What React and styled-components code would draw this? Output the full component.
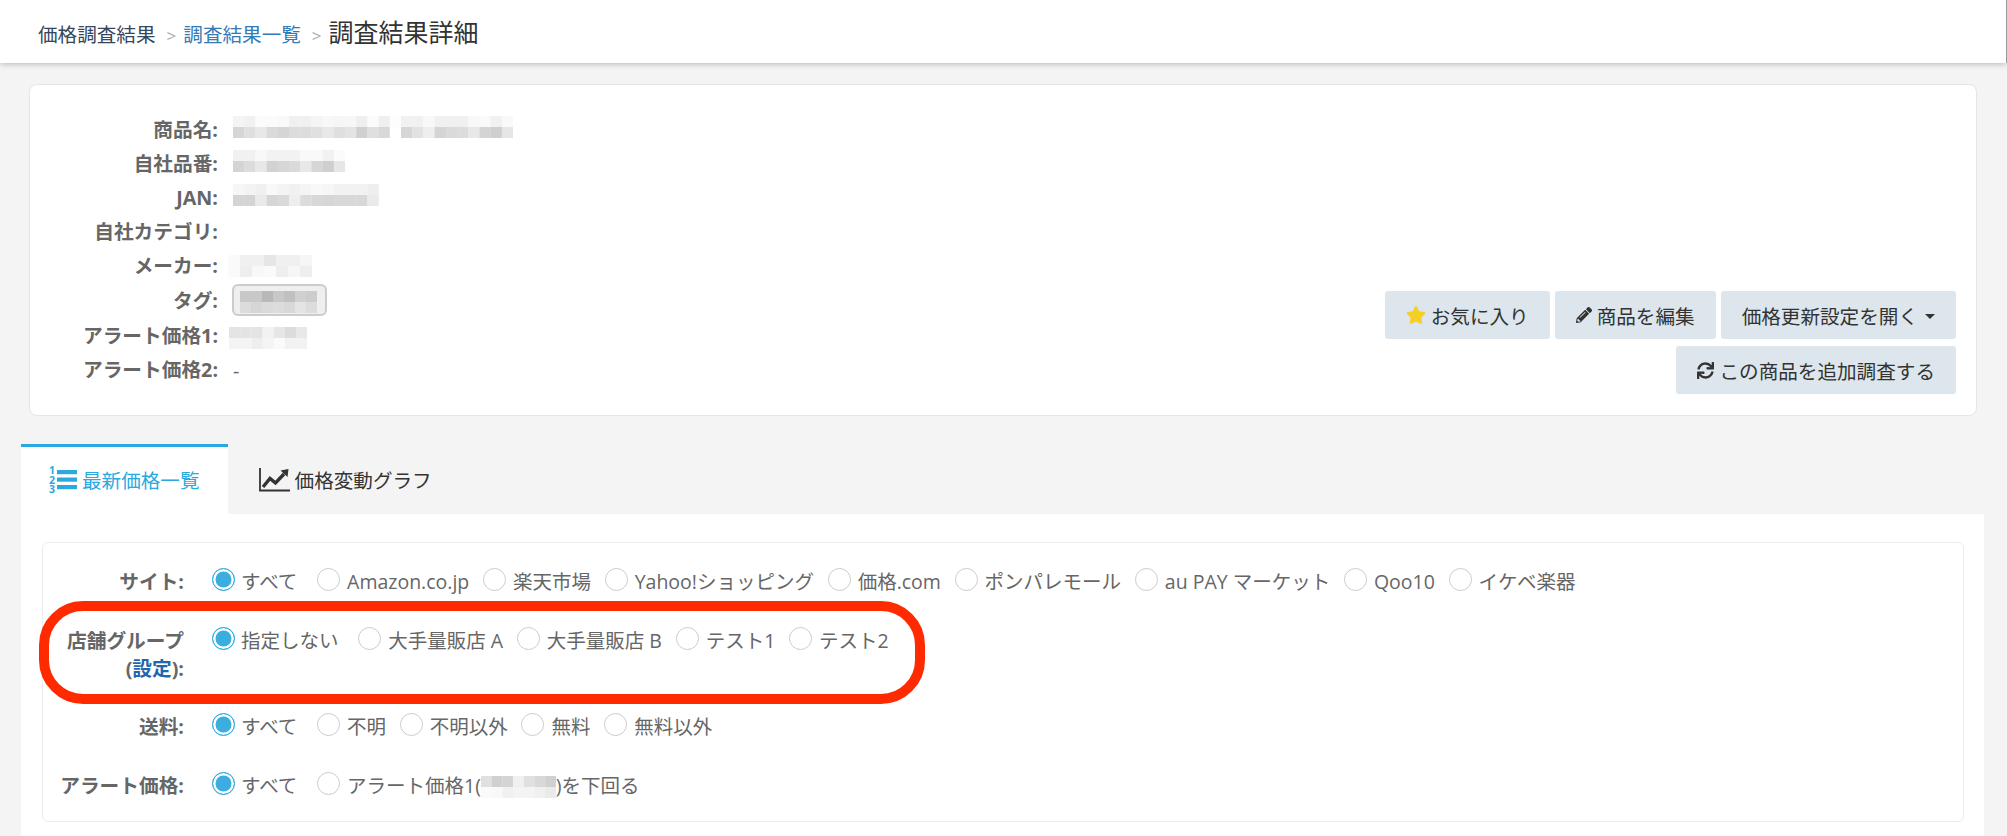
import React from "react";
import styled, { createGlobalStyle } from "styled-components";
import { FaStar, FaPencilAlt, FaSync } from "react-icons/fa";

const Global = createGlobalStyle`
  html, body { margin: 0; padding: 0; background: #f4f4f4; }
  body { font-family: "Open Sans", "Noto Sans CJK JP", sans-serif; font-size: 19.5px; color: #666; }
  * { box-sizing: border-box; }
`;

const Page = styled.div`
  width: 2007px;
  height: 836px;
  overflow: hidden;
  background: #f4f4f4;
`;

const Header = styled.header`
  height: 63px;
  background: #fff;
  border-right: 1px solid #9a9a9a;
  box-shadow: 0 1px 6px rgba(0, 0, 0, 0.25);
  display: flex;
  align-items: baseline;
  padding: 18px 0 0 38px;
  position: relative;
`;

const Crumb = styled.span`
  font-size: 19.6px;
  line-height: 28px;
  color: #34475c;
`;

const CrumbLink = styled.a`
  font-size: 19.6px;
  line-height: 28px;
  color: #337ab7;
`;

const CrumbSep = styled.span`
  font-size: 17px;
  color: #aaa;
  margin: 0 7px 0 11px;
`;

const CrumbTitle = styled.h1`
  margin: 0;
  font-size: 25px;
  line-height: 28px;
  font-weight: 400;
  color: #333;
`;

const Card = styled.section`
  margin: 21px 30px 0 29px;
  height: 332px;
  background: #fff;
  border: 1px solid #e6e6e6;
  border-radius: 8px;
  display: flex;
  justify-content: space-between;
  align-items: flex-end;
  padding: 28px 20px 21px 0;
`;

const Info = styled.dl`
  margin: 0;
  align-self: flex-start;
  display: flex;
  flex-direction: column;
`;

const InfoRow = styled.div`
  display: grid;
  grid-template-columns: 188px 1fr;
  column-gap: 15px;
  height: 34px;
  align-items: center;
  margin-top: ${(p) => p.$gap || 0}px;
`;

const InfoLabel = styled.dt`
  text-align: right;
  font-weight: 700;
  color: #666;
  font-size: 19.7px;
  line-height: 28px;
  white-space: nowrap;
`;

const InfoValue = styled.dd`
  margin: 0;
  display: flex;
  align-items: center;
  color: #666;
  height: 34px;
`;

const MosaicSvg = styled.svg`
  display: block;
  flex: none;
  margin-left: ${(p) => p.$left || 0}px;
  margin-top: ${(p) => p.$top || 0}px;
  filter: blur(0.4px);
`;

const InlineMosaic = styled(MosaicSvg)`
  display: inline-block;
  vertical-align: middle;
`;

const Tag = styled.span`
  width: 95px;
  height: 32px;
  background: #efefef;
  border: 2px solid #ccc;
  border-radius: 6px;
  display: flex;
  align-items: center;
  padding: 4px 0 0 6px;
  margin: -2px 0 0 -1px;
`;

const Actions = styled.div`
  display: flex;
  flex-direction: column;
  gap: 7px;
  align-items: flex-end;
`;

const ActionRow = styled.div`
  display: flex;
  gap: 5px;
`;

const Button = styled.button`
  height: 48px;
  border: 0;
  border-radius: 3px;
  background: #dce6ec;
  color: #333;
  font: inherit;
  font-size: 19.6px;
  padding: 0 21px;
  display: flex;
  align-items: center;
  gap: 5px;
  svg { flex: none; }
`;

const Caret = styled.i`
  width: 0;
  height: 0;
  margin-left: 2px;
  margin-top: 3px;
  border-left: 5px solid transparent;
  border-right: 5px solid transparent;
  border-top: 5px solid #333;
`;

const Star = styled(FaStar)`
  color: #f3d023;
`;

const Tabs = styled.nav`
  margin: 28px 0 0 21px;
  display: flex;
  height: 70px;
`;

const Tab = styled.div`
  height: 70px;
  display: flex;
  align-items: center;
  gap: 5px;
  padding: 0 ${(p) => (p.$active ? 28 : 31)}px 2px;
  background: ${(p) => (p.$active ? "#fff" : "transparent")};
  border-top: 3px solid ${(p) => (p.$active ? "#29a9e0" : "transparent")};
  color: ${(p) => (p.$active ? "#29a9e0" : "#333")};
  font-size: 19.6px;
`;

const TabIcon = styled.svg`
  display: block;
  flex: none;
`;

const IconDigit = styled.text`
  font-family: "Open Sans", sans-serif;
  font-size: 10.5px;
  font-weight: 700;
`;

const Panel = styled.div`
  margin: 0 23px 0 21px;
  background: #fff;
  padding: 28px 20px 40px 21px;
  height: 400px;
`;

const FilterBox = styled.div`
  position: relative;
  height: 280px;
  background: #fff;
  border: 1px solid #ececec;
  border-radius: 6px;
  padding: 25px 0 0;
  display: flex;
  flex-direction: column;
  gap: 30.5px;
`;

const FilterRow = styled.div`
  display: grid;
  grid-template-columns: 141px 1fr;
  column-gap: 28px;
`;

const FilterLabel = styled.div`
  text-align: right;
  font-weight: 700;
  color: #666;
  font-size: 19.7px;
  line-height: 28px;
  white-space: nowrap;
`;

const SettingLink = styled.a`
  color: #1f66ae;
`;

const Options = styled.div`
  display: flex;
  gap: 13.7px;
`;

const Option = styled.label`
  display: flex;
  gap: ${(p) => (p.$checked ? 6 : 7)}px;
  margin-right: ${(p) => (p.$checked ? 6 : 0)}px;
  line-height: 28px;
  color: #666;
  white-space: nowrap;
`;

const Radio = styled.span`
  flex: none;
  width: 23px;
  height: 23px;
  border-radius: 50%;
  border: 1.5px solid ${(p) => (p.$checked ? "#29a9e0" : "#ccc")};
  background: ${(p) => (p.$checked ? "#3aaedf" : "#fff")};
  box-shadow: ${(p) => (p.$checked ? "inset 0 0 0 2.5px #fff" : "none")};
`;

const Annotation = styled.div`
  position: absolute;
  left: -4px;
  top: 58px;
  width: 886px;
  height: 103px;
  border: 10px solid #ff2a00;
  border-radius: 44px;
  pointer-events: none;
`;

const hex = (v) => `#${v}${v}${v}`;

function Mosaic({ top, bottom, as: Comp = MosaicSvg, left, offset, cell = 11.2 }) {
  const w = top.length * cell;
  return (
    <Comp width={w} height={22} viewBox={`0 0 ${w} 22`} $left={left} $top={offset} aria-hidden="true">
      {top.map((c, i) => (
        <rect key={`t${i}`} x={i * cell} y={0} width={cell + 0.2} height={11} fill={hex(c)} />
      ))}
      {bottom.map((c, i) => (
        <rect key={`b${i}`} x={i * cell} y={11} width={cell + 0.2} height={11} fill={hex(c)} />
      ))}
    </Comp>
  );
}

const ListIcon = () => (
  <TabIcon width="28" height="34" viewBox="0 -3 28 34" fill="currentColor" aria-hidden="true">
    <rect x="8" y="4" width="20" height="4.2" />
    <rect x="8" y="11.5" width="20" height="4.2" />
    <rect x="8" y="19" width="20" height="4.2" />
    <IconDigit x="0" y="8">1</IconDigit>
    <IconDigit x="0" y="17.5">2</IconDigit>
    <IconDigit x="0" y="27">3</IconDigit>
  </TabIcon>
);

const ChartIcon = () => (
  <TabIcon width="31" height="24" viewBox="0 0 31 24" fill="none" aria-hidden="true">
    <path d="M1 0V22.5H31" stroke="#333" strokeWidth="1.8" />
    <path d="M4 19L11 10.5L16.5 15L25 6" stroke="#333" strokeWidth="3.4" />
    <path d="M21.5 2.5L29.5 1L28.5 9Z" fill="#333" />
  </TabIcon>
);

const sites = ["Amazon.co.jp", "楽天市場", "Yahoo!ショッピング", "価格.com", "ポンパレモール", "au PAY マーケット", "Qoo10", "イケベ楽器"];
const groups = ["大手量販店 A", "大手量販店 B", "テスト1", "テスト2"];
const shipping = ["不明", "不明以外", "無料", "無料以外"];

const Choice = ({ checked, children }) => (
  <Option $checked={checked}>
    <Radio $checked={checked} />
    <span>{children}</span>
  </Option>
);

export default function App() {
  return (
    <Page>
      <Global />
      <Header>
        <Crumb>価格調査結果</Crumb>
        <CrumbSep>&gt;</CrumbSep>
        <CrumbLink>調査結果一覧</CrumbLink>
        <CrumbSep>&gt;</CrumbSep>
        <CrumbTitle>調査結果詳細</CrumbTitle>
      </Header>

      <Card>
        <Info>
          <InfoRow>
            <InfoLabel>商品名:</InfoLabel>
            <InfoValue>
              <Mosaic
                offset={-7}
                top={"f4 f1 fb fb f9 f0 f0 f5 f8 f6 f7 ef fb ef fd f1 f1 f8 f0 f0 f0 f8 fa f1 f9".split(" ")}
                bottom={"d6 df e8 da d5 dc dc e0 e8 df e4 d0 df d8 ff d6 e2 ee d4 da dc e8 d4 cf e6".split(" ")}
              />
            </InfoValue>
          </InfoRow>
          <InfoRow>
            <InfoLabel>自社品番:</InfoLabel>
            <InfoValue>
              <Mosaic
                offset={-7}
                top={"f1 f1 f8 f2 f2 f2 f9 f9 f1 fb".split(" ")}
                bottom={"d4 dc e8 d2 d6 da e8 d6 cf e6".split(" ")}
              />
            </InfoValue>
          </InfoRow>
          <InfoRow>
            <InfoLabel>JAN:</InfoLabel>
            <InfoValue>
              <Mosaic
                offset={-7}
                top={"f6 f3 f0 f8 f4 f1 f4 f8 f6 f2 f2 f2 ee".split(" ")}
                bottom={"d4 d4 ea d6 da ee dc d8 d6 d8 d8 d8 ea".split(" ")}
              />
            </InfoValue>
          </InfoRow>
          <InfoRow>
            <InfoLabel>自社カテゴリ:</InfoLabel>
            <InfoValue />
          </InfoRow>
          <InfoRow>
            <InfoLabel>メーカー:</InfoLabel>
            <InfoValue>
              <Mosaic
                left={-5}
                offset={-1}
                cell={12}
                top={"fa f0 f0 e6 f0 f0 f6".split(" ")}
                bottom={"fa ee f8 fa ee f6 ee".split(" ")}
              />
            </InfoValue>
          </InfoRow>
          <InfoRow $gap={1}>
            <InfoLabel>タグ:</InfoLabel>
            <InfoValue>
              <Tag>
                <Mosaic
                  cell={11}
                  top={"c8 c8 b8 c8 c0 d0 cc".split(" ")}
                  bottom={"dc d6 da dc d8 e4 dc".split(" ")}
                />
              </Tag>
            </InfoValue>
          </InfoRow>
          <InfoRow $gap={1}>
            <InfoLabel>アラート価格1:</InfoLabel>
            <InfoValue>
              <Mosaic
                left={-4}
                offset={4}
                top={"e4 e4 e4 f2 e6 dc e8".split(" ")}
                bottom={"f4 f4 ee f4 fa f2 f2".split(" ")}
              />
            </InfoValue>
          </InfoRow>
          <InfoRow>
            <InfoLabel>アラート価格2:</InfoLabel>
            <InfoValue>-</InfoValue>
          </InfoRow>
        </Info>

        <Actions>
          <ActionRow>
            <Button>
              <Star size={20} />
              お気に入り
            </Button>
            <Button>
              <FaPencilAlt size={16} />
              商品を編集
            </Button>
            <Button>
              価格更新設定を開く
              <Caret />
            </Button>
          </ActionRow>
          <ActionRow>
            <Button>
              <FaSync size={17} />
              この商品を追加調査する
            </Button>
          </ActionRow>
        </Actions>
      </Card>

      <Tabs>
        <Tab $active>
          <ListIcon />
          最新価格一覧
        </Tab>
        <Tab>
          <ChartIcon />
          価格変動グラフ
        </Tab>
      </Tabs>

      <Panel>
        <FilterBox>
          <FilterRow>
            <FilterLabel>サイト:</FilterLabel>
            <Options>
              <Choice checked>すべて</Choice>
              {sites.map((s) => (
                <Choice key={s}>{s}</Choice>
              ))}
            </Options>
          </FilterRow>
          <FilterRow>
            <FilterLabel>
              店舗グループ
              <br />
              (<SettingLink>設定</SettingLink>):
            </FilterLabel>
            <Options>
              <Choice checked>指定しない</Choice>
              {groups.map((s) => (
                <Choice key={s}>{s}</Choice>
              ))}
            </Options>
          </FilterRow>
          <FilterRow>
            <FilterLabel>送料:</FilterLabel>
            <Options>
              <Choice checked>すべて</Choice>
              {shipping.map((s) => (
                <Choice key={s}>{s}</Choice>
              ))}
            </Options>
          </FilterRow>
          <FilterRow>
            <FilterLabel>アラート価格:</FilterLabel>
            <Options>
              <Choice checked>すべて</Choice>
              <Choice>
                アラート価格1(
                <Mosaic
                  as={InlineMosaic}
                  cell={10.7}
                  top={"e0 d0 d4 f0 e0 d8 d0".split(" ")}
                  bottom={"fa f8 f0 f4 f4 f0 ea".split(" ")}
                />
                )を下回る
              </Choice>
            </Options>
          </FilterRow>
          <Annotation />
        </FilterBox>
      </Panel>
    </Page>
  );
}
